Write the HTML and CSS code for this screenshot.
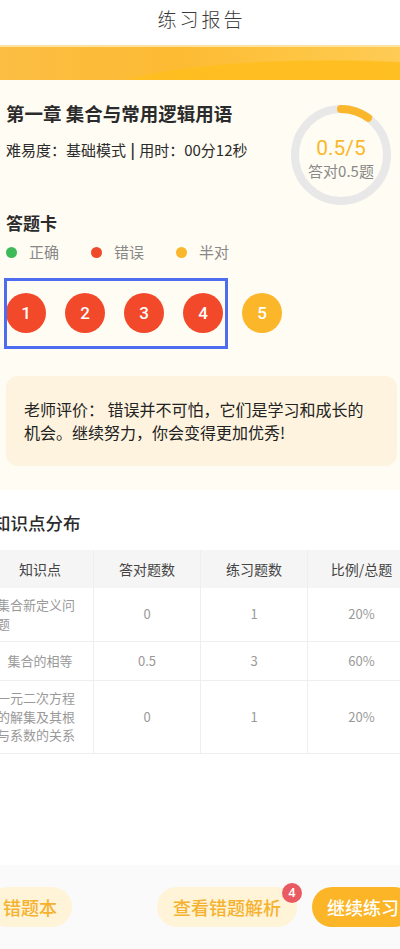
FILE: index.html
```html
<!DOCTYPE html>
<html lang="zh-CN">
<head>
<meta charset="utf-8">
<title>练习报告</title>
<link rel="stylesheet" href="styles.css">
</head>
<body>
<div class="page">
  <header class="topbar"><h1 class="topbar-title">练习报告</h1></header>
  <div class="band"></div>

  <section class="summary">
    <div class="summary-top">
      <div class="summary-info">
        <h2 class="chapter">第一章 集合与常用逻辑用语</h2>
        <p class="meta">难易度：基础模式 <span class="sep">|</span> 用时：00分12秒</p>
      </div>
      <div class="ring">
        <svg class="ring-svg" viewBox="0 0 100 100" width="100" height="100">
          <circle cx="50" cy="50" r="46" fill="none" stroke="#e8e8e8" stroke-width="8"/>
          <circle cx="50" cy="50" r="46" fill="none" stroke="#fbb72b" stroke-width="8" stroke-linecap="round" stroke-dasharray="28.9 300" transform="rotate(-90 50 50)"/>
        </svg>
        <div class="ring-text">
          <div class="score">0.5/5</div>
          <div class="score-sub">答对0.5题</div>
        </div>
      </div>
    </div>

    <h3 class="card-title">答题卡</h3>
    <ul class="legend">
      <li class="legend-item"><span class="dot dot-green"></span>正确</li>
      <li class="legend-item"><span class="dot dot-red"></span>错误</li>
      <li class="legend-item"><span class="dot dot-yellow"></span>半对</li>
    </ul>

    <div class="answers">
      <span class="ans ans-wrong">1</span>
      <span class="ans ans-wrong">2</span>
      <span class="ans ans-wrong">3</span>
      <span class="ans ans-wrong">4</span>
      <span class="ans ans-half">5</span>
      <div class="highlight"></div>
    </div>

    <div class="comment">老师评价： 错误并不可怕，它们是学习和成长的机会。继续努力，你会变得更加优秀!</div>
  </section>

  <section class="knowledge">
    <h3 class="section-title">知识点分布</h3>
    <div class="table">
      <div class="cell th">知识点</div>
      <div class="cell th">答对题数</div>
      <div class="cell th">练习题数</div>
      <div class="cell th last">比例/总题</div>

      <div class="cell td"><span class="txt">集合新定义问题</span></div>
      <div class="cell td">0</div>
      <div class="cell td">1</div>
      <div class="cell td last">20%</div>

      <div class="cell td"><span class="txt">集合的相等</span></div>
      <div class="cell td">0.5</div>
      <div class="cell td">3</div>
      <div class="cell td last">60%</div>

      <div class="cell td"><span class="txt">一元二次方程的解集及其根与系数的关系</span></div>
      <div class="cell td">0</div>
      <div class="cell td">1</div>
      <div class="cell td last">20%</div>
    </div>
  </section>

  <footer class="actions">
    <button class="pill pill-light">错题本</button>
    <button class="pill pill-light pill-review">查看错题解析<span class="badge">4</span></button>
    <button class="pill pill-solid">继续练习</button>
  </footer>
</div>
</body>
</html>
```
FILE: styles.css
```css
* { box-sizing: border-box; }
html, body { margin: 0; padding: 0; }
body {
  font-family: "Noto Sans CJK SC", "Noto Sans", sans-serif;
  color: #333;
  background: #fff;
}
.page {
  width: 400px;
  min-height: 949px;
  overflow: hidden;
  display: flex;
  flex-direction: column;
}
h1, h2, h3, p, ul { margin: 0; padding: 0; }

.topbar {
  height: 45px;
  display: flex;
  align-items: center;
  justify-content: center;
  background: #fff;
}
.topbar-title {
  font-size: 19px;
  font-weight: 300;
  letter-spacing: 3px;
  color: #3a3a3a;
  line-height: 24px;
  margin-top: -8px;
  padding-left: 3px;
}

.band {
  height: 35px;
  border-top: 2px solid #fde2a2;
  background:
    radial-gradient(ellipse 260px 40px at 330px 48px, rgba(255,190,30,0.9) 0%, rgba(255,190,30,0.9) 85%, rgba(255,190,30,0) 88%),
    linear-gradient(90deg, #fcbe43 0%, #fdbb33 45%, #fec543 75%, #fecb55 100%);
}

.summary {
  background: #fffcf3;
  padding: 0 3px 24px 6px;
}
.summary-top {
  display: flex;
  justify-content: space-between;
  align-items: flex-start;
}
.summary-info { padding-top: 20px; }
.chapter {
  font-size: 18.5px;
  font-weight: 700;
  line-height: 26px;
  color: #2b2b2b;
}
.meta {
  margin-top: 13px;
  font-size: 15px;
  line-height: 22px;
  font-weight: 400;
  color: #2b2b2b;
}
.sep { font-weight: 700; padding: 0 1px; }

.ring {
  margin-top: 25px;
  margin-right: 6px;
  width: 100px;
  height: 100px;
  display: grid;
}
.ring-svg, .ring-text { grid-area: 1 / 1; }
.ring-text {
  padding-top: 31px;
  text-align: center;
}
.score {
  font-family: "Roboto", "Noto Sans", sans-serif;
  font-size: 21px;
  line-height: 24px;
  color: #f8b82c;
}
.score-sub {
  font-size: 15px;
  line-height: 22px;
  color: #888;
}

.card-title {
  margin-top: 6px;
  font-size: 17px;
  font-weight: 700;
  line-height: 24px;
  color: #2b2b2b;
}
.legend {
  list-style: none;
  margin-top: 6px;
  display: flex;
  gap: 26px;
}
.legend-item {
  display: flex;
  align-items: center;
  gap: 12px;
  font-size: 15px;
  line-height: 22px;
  color: #888;
  width: 59px;
}
.dot {
  width: 11px;
  height: 11px;
  border-radius: 50%;
  flex: none;
}
.dot-green { background: #3fba5b; }
.dot-red { background: #f04a2c; }
.dot-yellow { background: #fbb72b; }

.answers {
  position: relative;
  margin-top: 30px;
  display: flex;
  gap: 19px;
}
.ans {
  width: 40px;
  height: 40px;
  border-radius: 50%;
  display: flex;
  align-items: center;
  justify-content: center;
  color: #fff;
  font-family: "Roboto", "Noto Sans", sans-serif;
  font-size: 17px;
  font-weight: 500;
}
.ans-wrong { background: #f2492a; }
.ans-half { background: #fbb629; }
.highlight {
  position: absolute;
  left: -2px;
  top: -15px;
  width: 224px;
  height: 71px;
  border: 3px solid #4d6cf0;
  pointer-events: none;
}

.comment {
  margin-top: 43px;
  background: #fdf3de;
  border-radius: 12px;
  padding: 22px 26px 22px 18px;
  font-size: 16px;
  line-height: 23px;
  font-weight: 400;
  color: #222;
}

.knowledge {
  margin-left: -13px;
  padding-top: 21px;
  background: #fff;
}
.section-title {
  padding-left: 6px;
  font-size: 17.5px;
  font-weight: 500;
  line-height: 24px;
  color: #2b2b2b;
}
.table {
  margin-top: 15px;
  display: grid;
  grid-template-columns: repeat(4, 107px);
}
.cell {
  display: flex;
  align-items: center;
  justify-content: center;
  border-right: 1px solid #eeeeee;
  border-bottom: 1px solid #eeeeee;
}
.cell.last { border-right: none; }
.th {
  height: 38px;
  background: #f5f5f5;
  font-size: 14px;
  color: #444;
  border-bottom: none;
}
.td {
  min-height: 39px;
  padding: 8px 10px;
  font-size: 13px;
  line-height: 18.5px;
  color: #999;
}
.txt { text-align: left; }

.actions {
  margin-top: auto;
  background: #fafafa;
  display: flex;
  align-items: center;
  padding: 22px 0;
  margin-left: -12px;
  margin-right: -14px;
  padding-left: 12px;
}
.pill {
  height: 40px;
  border-radius: 20px;
  border: none;
  font-family: "Noto Sans CJK SC", "Noto Sans", sans-serif;
  font-size: 18px;
  font-weight: 500;
  padding: 0 15px;
  line-height: 40px;
}
.pill:first-child { margin-left: -12px; }
.pill-light { background: #fff3d8; color: #f5b22f; }
.pill-review {
  position: relative;
  margin-left: auto;
  padding: 0 16px;
}
.pill-solid {
  margin-left: 15px;
  background: #fbb526;
  color: #fff;
}
.badge {
  position: absolute;
  right: -5px;
  top: -4px;
  width: 20px;
  height: 20px;
  border-radius: 50%;
  background: #e95a62;
  color: #fff;
  font-family: "Roboto", "Noto Sans", sans-serif;
  font-size: 13px;
  font-weight: 500;
  line-height: 20px;
  text-align: center;
}
```
